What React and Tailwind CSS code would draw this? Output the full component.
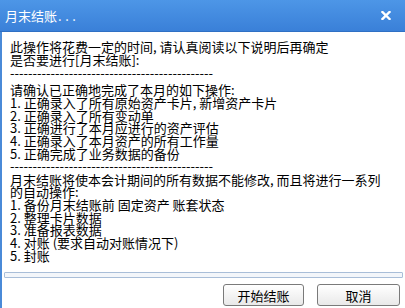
import React from "react";

const font = { fontFamily: '"Noto Sans CJK SC", "Noto Sans", sans-serif' };

const Line = ({ children, className = "" }) => (
    <div className={`h-[12.7px] leading-[12.7px] whitespace-nowrap ${className}`}>{children}</div>
);

const Dashes = ({ className = "" }) => (
    <div className={`whitespace-nowrap leading-[13px] h-[13px] ${className}`}>
        {"-".repeat(45)}
    </div>
);

const App = () => {
    return (
        <div style={font} className="w-[405px] h-[308px] bg-white flex flex-col text-black overflow-hidden">
            <div className="h-[32px] shrink-0 flex items-center justify-between pl-[5px] pr-[14px] bg-gradient-to-b from-[#4d96e7] to-[#3a80d8] border-b border-[#2f70c4]">
                <span className="text-[13px] text-white leading-none">
                    月末结账<span className="tracking-[3.5px] ml-[1px]">...</span>
                </span>
                <svg width="10" height="9" viewBox="0 0 10 9" aria-hidden="true">
                    <path d="M1.5 1 L8.5 8 M8.5 1 L1.5 8" stroke="white" strokeWidth="2.4" strokeLinecap="square" />
                </svg>
            </div>

            <div className="flex-1 flex flex-col border-l-2 border-[#4a8ad8]">
                <div className="flex-1 pl-[8px] pt-[9px] text-[13px]">
                    <Line>此操作将花费一定的时间, 请认真阅读以下说明后再确定</Line>
                    <Line>是否要进行[月末结账]:</Line>
                    <Dashes className="mb-[5px]" />
                    <Line>请确认已正确地完成了本月的如下操作:</Line>
                    <Line>1. 正确录入了所有原始资产卡片, 新增资产卡片</Line>
                    <Line>2. 正确录入了所有变动单</Line>
                    <Line>3. 正确进行了本月应进行的资产评估</Line>
                    <Line>4. 正确录入了本月资产的所有工作量</Line>
                    <Line>5. 正确完成了业务数据的备份</Line>
                    <Dashes className="!h-[10px] !leading-[10px] mb-[3px]" />
                    <Line>月末结账将使本会计期间的所有数据不能修改, 而且将进行一系列</Line>
                    <Line>的自动操作:</Line>
                    <Line>1. 备份月末结账前 固定资产 账套状态</Line>
                    <Line>2. 整理卡片数据</Line>
                    <Line>3. 准备报表数据</Line>
                    <Line>4. 对账 (要求自动对账情况下)</Line>
                    <Line>5. 封账</Line>
                </div>

                <div className="mx-[2px] h-[6px] shrink-0 border border-[#a9bed8] bg-[#f3f6fa] rounded-[1px]" />

                <div className="flex justify-end gap-[13px] pr-[5px] pt-[6px] pb-[2px] shrink-0">
                    <button
                        type="button"
                        className="w-[81px] h-[22px] rounded-[3px] border border-[#7a7a7a] bg-gradient-to-b from-white to-[#e9e9e9] text-[13px] leading-none"
                    >
                        开始结账
                    </button>
                    <button
                        type="button"
                        className="w-[83px] h-[22px] rounded-[3px] border border-[#7a7a7a] bg-gradient-to-b from-white to-[#e9e9e9] text-[13px] leading-none"
                    >
                        取消
                    </button>
                </div>
            </div>
        </div>
    );
};

export default App;
